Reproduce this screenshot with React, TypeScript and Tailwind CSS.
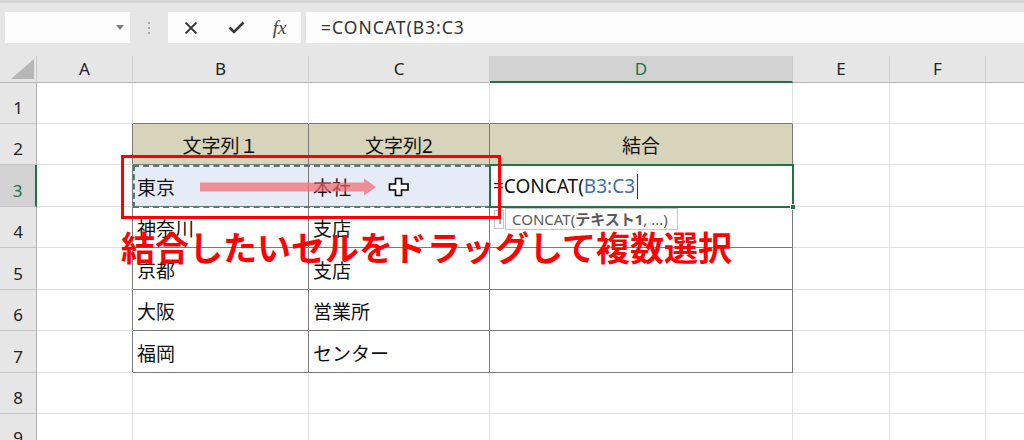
import React from "react";

const COLS = ["A", "B", "C", "D", "E", "F", ""];
const ROWS = [1, 2, 3, 4, 5, 6, 7, 8, 9];

const data: Record<string, string> = {
  "2-1": "文字列１",
  "2-2": "文字列2",
  "2-3": "結合",
  "3-1": "東京",
  "3-2": "本社",
  "4-1": "神奈川",
  "4-2": "支店",
  "5-1": "京都",
  "5-2": "支店",
  "6-1": "大阪",
  "6-2": "営業所",
  "7-1": "福岡",
  "7-2": "センター",
};

const inTable = (r: number, c: number) => r >= 2 && r <= 7 && c >= 1 && c <= 3;

function Cell({ r, c }: { r: number; c: number }) {
  const rightDark = inTable(r, c) || inTable(r, c + 1);
  const bottomDark = inTable(r, c) || inTable(r + 1, c);
  const isHead = r === 2 && inTable(r, c);
  const isSel = r === 3 && (c === 1 || c === 2);
  const txt = data[`${r}-${c}`];
  return (
    <div
      className={[
        "flex items-end pb-[5px] overflow-visible whitespace-nowrap text-[19px] leading-[26px] text-[#111]",
        "border-r border-b",
        rightDark ? "border-r-[#7a7a7a]" : "border-r-[#e1e1e1]",
        bottomDark ? "border-b-[#7a7a7a]" : "border-b-[#e1e1e1]",
        isHead ? "bg-[#d8d4bc] justify-center" : isSel ? "bg-[#e6ecf7] pl-[4px]" : "bg-white pl-[4px]",
      ].join(" ")}
    >
      {txt ?? ""}
    </div>
  );
}

export default function App() {
  return (
    <div className="relative w-[1024px] h-[440px] overflow-hidden bg-white font-['Noto_Sans','Noto_Sans_CJK_JP',sans-serif]">
      {/* formula bar area */}
      <div className="h-[56px] bg-[#e6e6e6] border-t-[3px] border-t-[#d6d6d6] flex items-start pt-[9px]">
        <div className="ml-[5px] w-[125px] h-[31px] bg-[#fdfdfd] flex items-center justify-end pr-[6px]">
          <svg width="8" height="5" viewBox="0 0 8 5">
            <path d="M0 0 L8 0 L4 5 Z" fill="#7b7b7b" />
          </svg>
        </div>
        <div className="w-[38px] h-[31px] flex flex-col items-center justify-center gap-[3px]">
          <span className="w-[2px] h-[2px] bg-[#a8a8a8]" />
          <span className="w-[2px] h-[2px] bg-[#a8a8a8]" />
          <span className="w-[2px] h-[2px] bg-[#a8a8a8]" />
        </div>
        <div className="w-[133px] h-[31px] bg-[#fdfdfd] flex items-center">
          <div className="w-[45px] flex justify-center pl-[1px]">
            <svg width="14" height="14" viewBox="0 0 14 14">
              <path d="M1.5 1.5 L12.5 12.5 M12.5 1.5 L1.5 12.5" stroke="#3a3a3a" strokeWidth="1.8" />
            </svg>
          </div>
          <div className="w-[45px] flex justify-center pl-[2px]">
            <svg width="17" height="13" viewBox="0 0 17 13">
              <path d="M1.5 6.5 L6 11 L15.5 1.5" stroke="#3a3a3a" strokeWidth="2.6" fill="none" />
            </svg>
          </div>
          <div className="w-[43px] flex justify-center">
            <span className="font-['Liberation_Serif',serif] italic text-[19px] leading-none text-[#444]">fx</span>
          </div>
        </div>
        <div className="ml-[5px] flex-1 h-[31px] bg-[#fdfdfd] flex items-center pl-[15px] text-[17.5px] tracking-[1px] text-[#333]">
          =CONCAT(B3:C3
        </div>
      </div>

      {/* sheet */}
      <div className="relative w-[1100px] grid grid-cols-[37px_96px_176px_181px_303px_97px_96px_114px] grid-rows-[27px_41px_41px_42px_41px_42px_41px_42px_41px_40px]">
        {/* corner */}
        <div className="bg-[#e6e6e6] border-r border-r-[#c8c8c8] border-b border-b-[#b4b4b4] flex items-end justify-end pr-[2px] pb-[3px]">
          <svg width="23" height="20" viewBox="0 0 23 20">
            <path d="M0 20 L23 20 L23 0 Z" fill="#b6b6b6" />
          </svg>
        </div>
        {COLS.map((c, i) =>
          i === 3 ? (
            <div
              key={i}
              className="bg-[#d2d2d2] border-r border-r-[#c8c8c8] border-b-2 border-b-[#217346] flex items-center justify-center text-[17px] text-[#217346]"
            >
              {c}
            </div>
          ) : (
            <div
              key={i}
              className="bg-[#e6e6e6] border-r border-r-[#cdcdcd] border-b border-b-[#b4b4b4] flex items-center justify-center text-[17px] text-[#222]"
            >
              {c}
            </div>
          )
        )}
        {ROWS.map((r) => (
          <React.Fragment key={r}>
            {r === 3 ? (
              <div className="bg-[#d2d2d2] border-r-2 border-r-[#217346] border-b border-b-[#c6c6c6] flex items-end justify-center pb-[3px] text-[17px] text-[#217346]">
                {r}
              </div>
            ) : (
              <div className="bg-[#e6e6e6] border-r border-r-[#b4b4b4] border-b border-b-[#c6c6c6] flex items-end justify-center pb-[3px] text-[17px] text-[#222]">
                {r}
              </div>
            )}
            {COLS.map((_, c) => (
              <Cell key={c} r={r} c={c} />
            ))}
          </React.Fragment>
        ))}

        {/* marching ants around B3:C3 */}
        <div className="absolute left-[133px] top-[109px] w-[358px] h-[43px] border-2 border-dashed border-[#4f7d70] pointer-events-none" />

        {/* active cell D3 */}
        <div className="absolute left-[489px] top-[108px] w-[305px] h-[44px] border-2 border-[#217346] bg-white flex items-end pb-[7px] pl-[2px] text-[19px] leading-[26px] whitespace-nowrap">
          <span className="text-[#111]">=CONCAT(</span>
          <span className="text-[#3e6fa6]">B3:C3</span>
          <span className="ml-[2px] w-[1px] h-[25px] bg-[#333]" />
          <span className="absolute right-[-4px] bottom-[-4px] w-[6px] h-[6px] bg-[#217346] border border-white" />
        </div>

        {/* small autocomplete box */}
        <div className="absolute left-[494px] top-[154px] w-[10px] h-[19px] bg-white border border-[#c6c6c6] text-[13px] leading-[17px] text-[#666] pl-[1px]">
          1
        </div>

        {/* tooltip */}
        <div className="absolute left-[505px] top-[152px] w-[173px] h-[22px] bg-white border border-[#c6c6c6] flex items-center pl-[6px] text-[15px] text-[#5a5a5a] whitespace-nowrap">
          CONCAT(<b className="font-bold">テキスト1</b>, ...)
        </div>

        {/* red rectangle */}
        <div className="absolute left-[121px] top-[99px] w-[380px] h-[64px] border-[3px] border-[#ff0000] pointer-events-none" />

        {/* arrow */}
        <svg className="absolute left-[198px] top-[122px]" width="180" height="18" viewBox="0 0 180 18">
          <path d="M2 4.5 L166 4.5 L166 0.5 L178 9 L166 17.5 L166 13.5 L2 13.5 Z" fill="#f4666d" fillOpacity="0.7" />
        </svg>

        {/* cursor */}
        <svg className="absolute left-[388px] top-[121px]" width="22" height="20" viewBox="0 0 22 20">
          <path
            d="M7.5 1.5 L13.5 1.5 L13.5 7 L20 7 L20 13 L13.5 13 L13.5 18.5 L7.5 18.5 L7.5 13 L1.5 13 L1.5 7 L7.5 7 Z"
            fill="#ffffff"
            stroke="#000"
            strokeWidth="1.6"
          />
        </svg>

        {/* red annotation */}
        <div className="absolute left-[121px] top-[172px] text-[34px] leading-[38px] font-bold text-[#ff0000] whitespace-nowrap font-['Noto_Sans_CJK_JP',sans-serif]">
          結合したいセルをドラッグして複数選択
        </div>
      </div>
    </div>
  );
}
